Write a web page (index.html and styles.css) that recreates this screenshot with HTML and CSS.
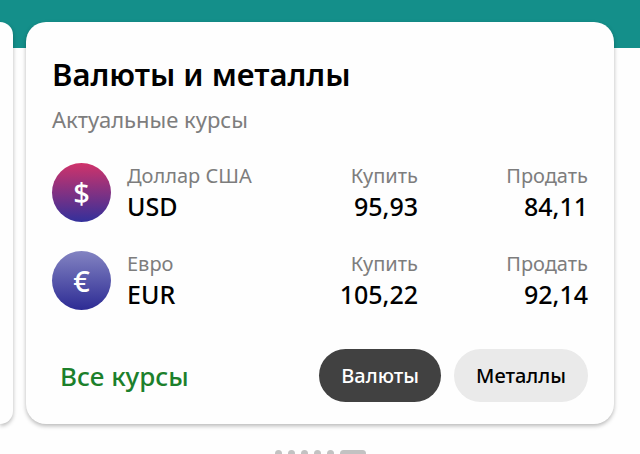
FILE: index.html
```
<!DOCTYPE html>
<html lang="ru">
<head>
	<meta charset="UTF-8">
	<title>Валюты и металлы</title>
	<meta name="viewport" content="width=device-width, initial-scale=1">
	<link rel="stylesheet" href="styles.css">
</head>
<body>
	<main class="carousel">
		<div class="card card-prev"></div>

		<section class="card rates">
			<h1>Валюты и металлы</h1>
			<p class="subtitle">Актуальные курсы</p>

			<table class="rates-table">
				<tr>
					<td class="icon-cell"><span class="coin usd">$</span></td>
					<th scope="row"><span class="label">Доллар США</span><span class="value">USD</span></th>
					<td><span class="label">Купить</span><span class="value">95,93</span></td>
					<td><span class="label">Продать</span><span class="value">84,11</span></td>
				</tr>
				<tr>
					<td class="icon-cell"><span class="coin eur">€</span></td>
					<th scope="row"><span class="label">Евро</span><span class="value">EUR</span></th>
					<td><span class="label">Купить</span><span class="value">105,22</span></td>
					<td><span class="label">Продать</span><span class="value">92,14</span></td>
				</tr>
			</table>

			<div class="footer">
				<a class="all-rates" href="#">Все курсы</a>
				<div class="tabs">
					<button type="button" class="tab active" aria-pressed="true">Валюты</button>
					<button type="button" class="tab" aria-pressed="false">Металлы</button>
				</div>
			</div>
		</section>
	</main>

	<div class="dots">
		<span class="dot"></span>
		<span class="dot"></span>
		<span class="dot"></span>
		<span class="dot"></span>
		<span class="dot"></span>
		<span class="dot current"></span>
	</div>
</body>
</html>
```
FILE: styles.css
```
* {
	box-sizing: border-box;
}

html, body {
	height: 100%;
}

body {
	margin: 0;
	overflow: hidden;
	color: #000;
	background: #fefefe linear-gradient(#148f8a, #148f8a) no-repeat top / 100% 48px;
	font-family: "Noto Sans", "Open Sans", sans-serif;
}

/* cards */

.carousel {
	display: grid;
	grid-template-columns: 13px 1fr;
	gap: 13px;
	padding: 22px 26px 0 0;
}

.card {
	background: #fefefe;
	border-radius: 20px;
	box-shadow: 0 2px 4px rgba(0, 0, 0, .28);
}

/* only the right edge of the previous card is visible */
.card-prev {
	border-radius: 0 20px 20px 0;
}

.rates {
	padding: 31px 26px 22px;
}

h1 {
	margin: 0;
	font-size: 31px;
	font-weight: 600;
	line-height: 42px;
}

.subtitle {
	margin: 10px 0 30px;
	font-size: 22px;
	line-height: 28px;
	color: #7d7d7d;
}

/* table */

.rates-table {
	width: 100%;
	border-collapse: collapse;
}

.rates-table td,
.rates-table th {
	padding: 0 0 28px;
	font-weight: 400;
	text-align: right;
	vertical-align: top;
}

.rates-table td:last-child {
	width: 170px;
}

.rates-table th {
	text-align: left;
	white-space: nowrap;
}

.rates-table .icon-cell {
	width: 75px;
	text-align: left;
}

.coin {
	display: flex;
	align-items: center;
	justify-content: center;
	width: 59px;
	height: 59px;
	border-radius: 50%;
	color: #fff;
	font-size: 29px;
	font-weight: 500;
}

.usd {
	background: linear-gradient(#d0336a, #33309b);
}

.eur {
	background: linear-gradient(#8384c2, #2d2b94);
}

.label,
.value {
	display: block;
}

.label {
	font-size: 20px;
	line-height: 26px;
	color: #7d7d7d;
}

.value {
	font-size: 25px;
	font-weight: 500;
	line-height: 34px;
}

/* footer */

.footer {
	display: flex;
	align-items: center;
	justify-content: space-between;
	padding-top: 10px;
}

.all-rates {
	padding-left: 8px;
	color: #1c802b;
	font-size: 26px;
	font-weight: 500;
	line-height: 34px;
	text-decoration: none;
}

.tabs {
	display: flex;
	gap: 13px;
}

.tab {
	height: 53px;
	padding: 0 22px;
	border: 0;
	border-radius: 27px;
	background: #eaeaea;
	color: #000;
	font: 500 20px "Noto Sans", "Open Sans", sans-serif;
}

.tab.active {
	background: #414141;
	color: #fff;
}

/* pager */

.dots {
	display: flex;
	justify-content: center;
	gap: 6px;
	padding-top: 26px;
}

.dot {
	width: 7px;
	height: 7px;
	border-radius: 4px;
	background: #c2c2c2;
}

.dot.current {
	width: 26px;
}
```
